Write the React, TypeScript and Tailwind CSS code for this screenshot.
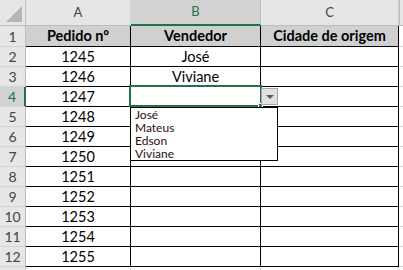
import React from "react";

const font = { fontFamily: "Lato, 'Noto Sans', sans-serif" };

const rows: { n: number; a: string; b: string }[] = [
  { n: 2, a: "1245", b: "José" },
  { n: 3, a: "1246", b: "Viviane" },
  { n: 4, a: "1247", b: "" },
  { n: 5, a: "1248", b: "" },
  { n: 6, a: "1249", b: "" },
  { n: 7, a: "1250", b: "" },
  { n: 8, a: "1251", b: "" },
  { n: 9, a: "1252", b: "" },
  { n: 10, a: "1253", b: "" },
  { n: 11, a: "1254", b: "" },
  { n: 12, a: "1255", b: "" },
];

export default function App() {
  return (
    <div
      className="relative w-[403px] h-[270px] overflow-hidden bg-white text-black"
      style={font}
    >
      <div className="grid grid-cols-[26px_105px_130px_138px_1fr]">
        {/* header row */}
        <div className="h-[26px] bg-[#e6e6e6] border-r border-b border-[#bdbdbd] relative">
          <div className="absolute right-[3px] bottom-[3px] w-0 h-0 border-l-[16px] border-l-transparent border-b-[16px] border-b-[#b5b5b5]" />
        </div>
        <div className="h-[26px] bg-[#e6e6e6] border-r border-r-[#d0d0d0] border-b border-b-[#bdbdbd] flex items-center justify-center text-[13px] text-[#444]">
          A
        </div>
        <div className="h-[26px] bg-[#d2d2d2] border-r border-r-[#bdbdbd] border-b-2 border-b-[#217346] flex items-center justify-center text-[13px] text-[#217346]">
          B
        </div>
        <div className="h-[26px] bg-[#e6e6e6] border-r border-r-[#d0d0d0] border-b border-b-[#bdbdbd] flex items-center justify-center text-[13px] text-[#444]">
          C
        </div>
        <div className="h-[26px] bg-[#e6e6e6] border-b border-b-[#bdbdbd] border-l border-l-[#bdbdbd]" />

        {/* row 1 */}
        <div className="h-[21px] bg-[#e6e6e6] border-r border-r-[#bdbdbd] border-b border-b-[#d4d4d4] flex items-center justify-center text-[14px] text-[#444]">
          1
        </div>
        <div className="h-[21px] bg-[#d0d0d0] border-r border-b border-black flex items-center justify-center text-[14.5px] font-bold">
          Pedido nº
        </div>
        <div className="h-[21px] bg-[#d0d0d0] border-r border-b border-black flex items-center justify-center text-[14.5px] font-bold">
          Vendedor
        </div>
        <div className="h-[21px] bg-[#d0d0d0] border-r border-b border-black flex items-center justify-center text-[14.5px] font-bold">
          Cidade de origem
        </div>
        <div className="h-[21px] border-b border-[#d4d4d4]" />

        {rows.map((r) => (
          <React.Fragment key={r.n}>
            <div
              className={
                r.n === 4
                  ? "h-[20px] bg-[#d2d2d2] border-r-2 border-r-[#217346] border-b border-b-[#d4d4d4] flex items-center justify-center text-[14px] text-[#217346]"
                  : "h-[20px] bg-[#e6e6e6] border-r border-r-[#bdbdbd] border-b border-b-[#d4d4d4] flex items-center justify-center text-[14px] text-[#444]"
              }
            >
              {r.n}
            </div>
            <div className="h-[20px] border-r border-b border-black flex items-center justify-center text-[14.5px]">
              {r.a}
            </div>
            <div className="h-[20px] border-r border-b border-black flex items-center justify-center text-[14.5px]">
              {r.b}
            </div>
            <div className="h-[20px] border-r border-b border-black" />
            <div className="h-[20px] border-b border-[#d4d4d4]" />
          </React.Fragment>
        ))}

        {/* partial row 13 */}
        <div className="h-[10px] bg-[#e6e6e6] border-r border-r-[#bdbdbd]" />
        <div className="h-[10px] border-r border-[#d4d4d4]" />
        <div className="h-[10px] border-r border-[#d4d4d4]" />
        <div className="h-[10px] border-r border-[#d4d4d4]" />
        <div className="h-[10px]" />
      </div>

      {/* selection on B4 */}
      <div className="absolute left-[129px] top-[85px] w-[133px] h-[22px] border-2 border-[#217346]" />
      <div className="absolute left-[258px] top-[103px] w-[5px] h-[5px] bg-[#217346] border border-white" />

      {/* dropdown button */}
      <div className="absolute left-[261px] top-[88px] w-[17px] h-[17px] bg-[#e1e1e1] border border-[#a9a9a9] flex items-center justify-center">
        <div className="w-0 h-0 border-l-[4px] border-r-[4px] border-t-[4px] border-l-transparent border-r-transparent border-t-[#5b5b5b]" />
      </div>

      {/* dropdown list */}
      <div className="absolute left-[130px] top-[107px] w-[148px] h-[54px] bg-white border border-black pl-[4px] text-[12px] leading-[13px] text-[#2d0c0c]">
        <div>José</div>
        <div>Mateus</div>
        <div>Edson</div>
        <div>Viviane</div>
      </div>
    </div>
  );
}
